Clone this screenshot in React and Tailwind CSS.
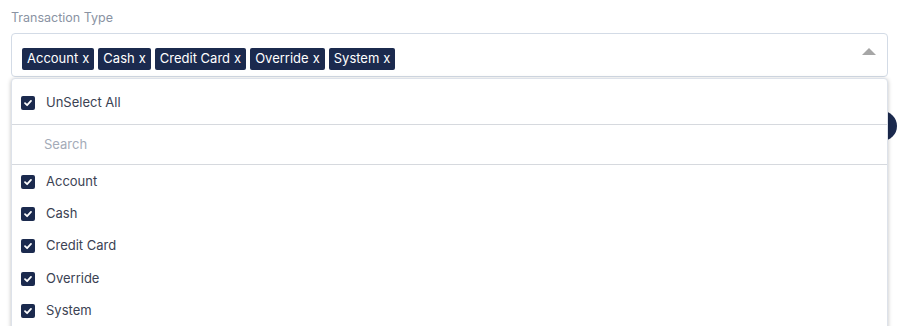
import React from "react";

const tags = ["Account", "Cash", "Credit Card", "Override", "System"];

function Check() {
  return (
    <span className="flex h-[14px] w-[14px] shrink-0 items-center justify-center rounded-[2px] bg-[#1b2a4e]">
      <svg width="10" height="10" viewBox="0 0 10 10" fill="none">
        <path d="M2 5.2 L4.1 7.2 L8 2.9" stroke="white" strokeWidth="1.8" strokeLinecap="round" strokeLinejoin="round" />
      </svg>
    </span>
  );
}

export default function App() {
  return (
    <div className="relative h-[326px] w-[899px] overflow-hidden bg-white px-[11px] pt-[10px]" style={{ fontFamily: "Inter, 'Noto Sans', sans-serif" }}>
      <div className="text-[12.5px] leading-[16px] text-[#8a93a3]">Transaction Type</div>
      <div className="mt-[7px] flex h-[44px] items-start justify-between rounded-[4px] border border-[#d3dbe6] pl-[10px] pr-[11px] pt-[14px]">
        <div className="flex items-center gap-[4px]">
          {tags.map((t) => (
            <span key={t} className="flex h-[22px] items-center gap-[4px] rounded-[2px] bg-[#1b2a4e] px-[5px] text-[13px] text-white">
              <span>{t}</span>
              <span>x</span>
            </span>
          ))}
        </div>
        <svg className="mt-[0px]" width="14" height="7" viewBox="0 0 14 7"><path d="M0 7 L7 0 L14 7 Z" fill="#a6a6a6" /></svg>
      </div>
      <div className="absolute left-[867px] top-[111px] h-[30px] w-[30px] rounded-full bg-[#1b2a4e]" />
      <div className="relative z-10 mt-[1px] h-[260px] rounded-[4px] border border-[#dde2ea] bg-white shadow-[0_1px_4px_rgba(0,0,0,0.25)]">
        <div className="flex h-[46px] items-center gap-[11px] border-b border-[#d6d9de] pl-[9px] pt-[3px] text-[13px] text-[#3b4253]">
          <Check />
          <span>UnSelect All</span>
        </div>
        <div className="flex h-[40px] items-center border-b border-[#d6d9de] pl-[32px] text-[13px] text-[#a4abb8]">Search</div>
        <div className="pt-[0.5px]">
          {tags.map((t) => (
            <div key={t} className="flex h-[32.3px] items-center gap-[11px] pl-[9px] text-[13px] text-[#3b4253]">
              <Check />
              <span>{t}</span>
            </div>
          ))}
        </div>
      </div>
    </div>
  );
}
